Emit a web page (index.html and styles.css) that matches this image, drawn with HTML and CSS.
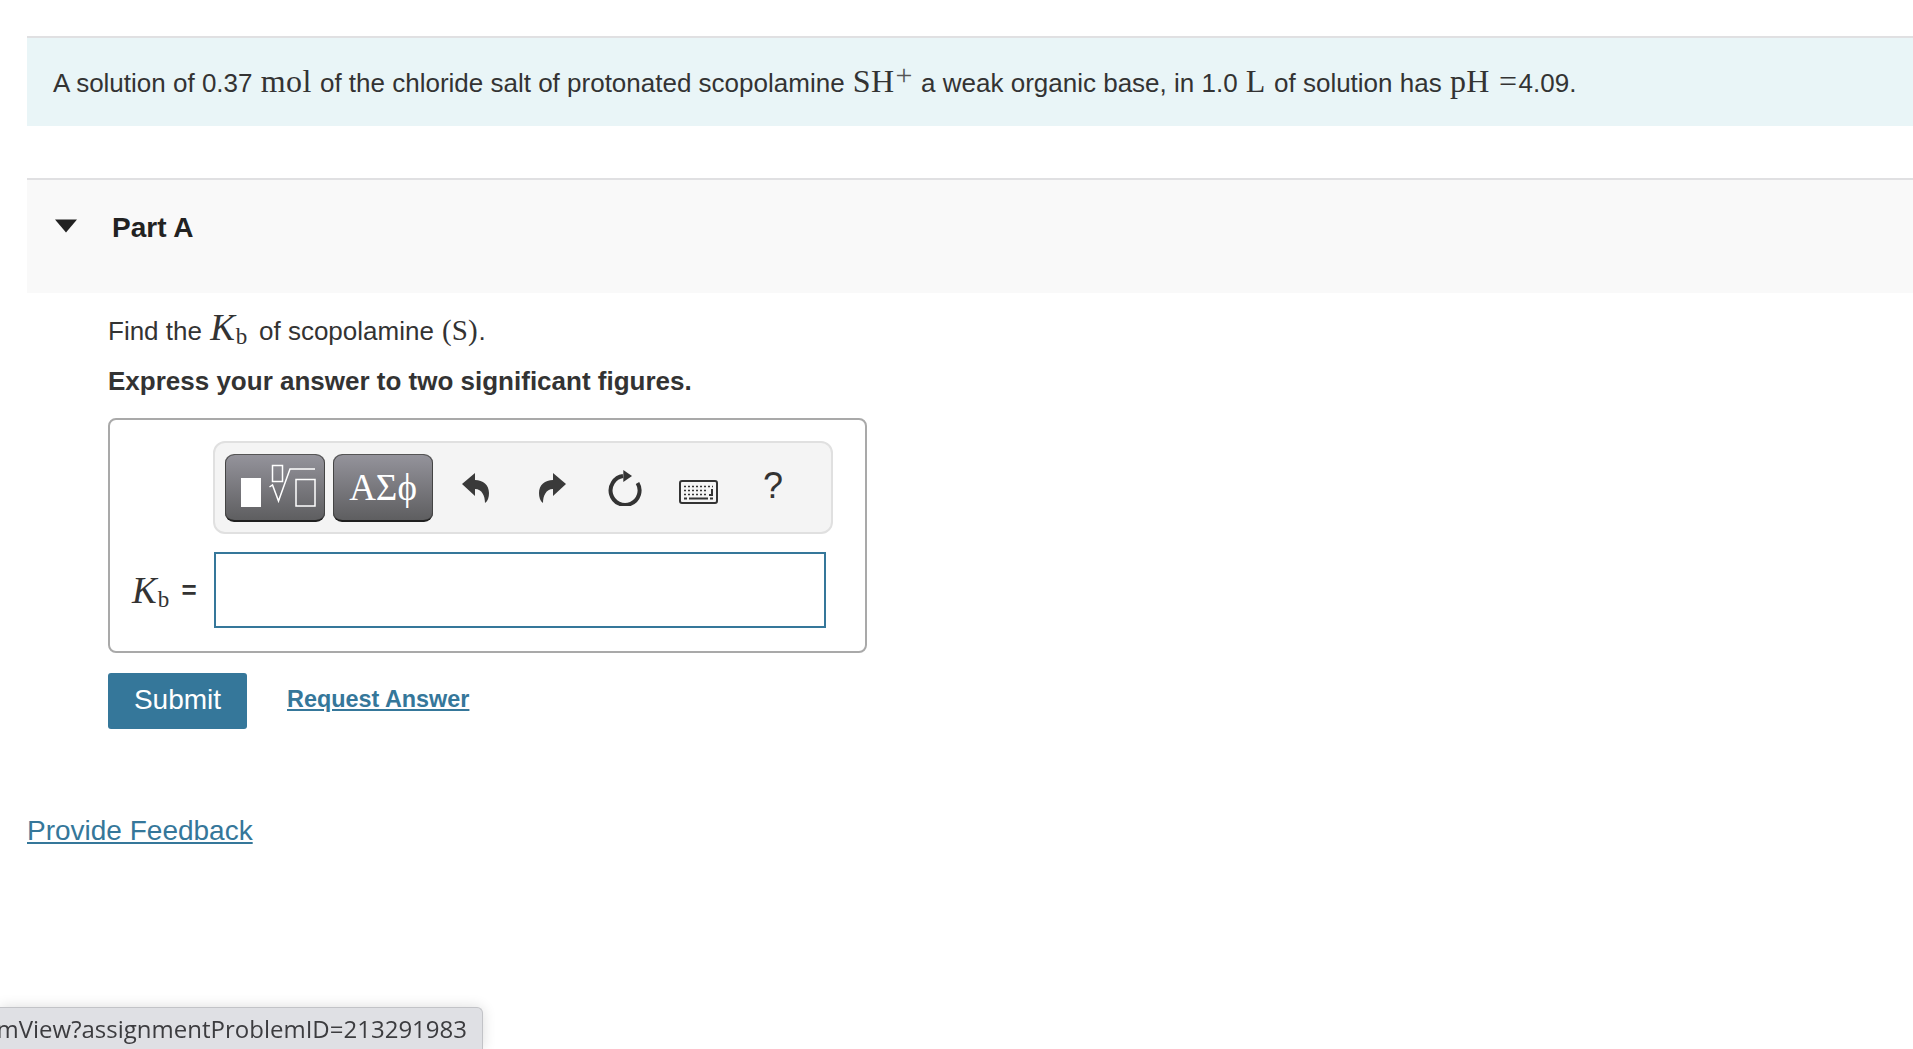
FILE: index.html
```html
<!DOCTYPE html>
<html lang="en">
<head>
<meta charset="utf-8">
<title>Part A</title>
<link rel="stylesheet" href="styles.css">
</head>
<body>
<main class="page">
  <section class="stem">
    <p>A solution of 0.37 <span class="m">mol</span> of the chloride salt of protonated scopolamine <span class="m">SH<sup>+</sup></span> a weak organic base, in 1.0 <span class="m">L</span> of solution has <span class="m">pH</span> <span class="m">=</span>4.09.</p>
  </section>
  <section class="part-head">
    <svg class="caret" width="22" height="14" viewBox="0 0 22 14"><path d="M0 0.5H22L11 13.5Z" fill="#222"/></svg>
    <h2>Part A</h2>
  </section>
  <section class="part-body">
    <p class="q">Find the <span class="m kb"><i>K</i><sub>b</sub></span> of scopolamine <span class="m paren">(S)</span>.</p>
    <p class="inst">Express your answer to two significant figures.</p>
    <div class="answer">
      <div class="toolbar">
        <button class="tbtn" aria-label="Templates">
          <svg width="100" height="68" viewBox="0 0 100 68" fill="none" stroke="#fff" stroke-width="1.500">
            <rect x="16" y="25" width="20" height="29" fill="#fff" stroke="none"/>
            <rect x="47.500" y="12.500" width="10" height="16"/>
            <path d="M44.500 34l3-2 6 16 11.500-32h25"/>
            <rect x="71" y="26.500" width="19" height="26.500"/>
          </svg>
        </button>
        <button class="tbtn sym">ΑΣϕ</button>
        <span class="ico ico-undo"><svg width="27" height="30" viewBox="0 0 27 30"><path d="M0 11 13 0v7c8 0 14 5 14 13 0 4-1 8-4 10 0-7-3-14-10-14v7z" fill="#3a3a3a"/></svg></span>
        <span class="ico ico-redo"><svg width="27" height="30" viewBox="0 0 27 30"><path d="M27 11 14 0v7C6 7 0 12 0 20c0 4 1 8 4 10 0-7 3-14 10-14v7z" fill="#3a3a3a"/></svg></span>
        <span class="ico ico-reset"><svg width="34" height="36" viewBox="0 0 34 36" fill="none"><path d="M15 6.100A14.500 14.500 0 1 0 29.500 13" stroke="#333" stroke-width="4"/><path d="M15.300 0 24 6 15.300 12z" fill="#333"/></svg></span>
        <span class="ico ico-kbd"><svg width="39" height="24" viewBox="0 0 39 24" fill="none" stroke="#333"><rect x="1" y="1" width="37" height="22" rx="2" stroke-width="2"/><path d="M5 6.500h29M5 10.500h24M5 14.500h24" stroke-width="1.500" stroke-dasharray="2 2"/><path d="M10 18.500h19M33 9v6h-3" stroke-width="2"/><path d="M5 18.500h3M31 18.500h3" stroke-width="2"/></svg></span>
        <span class="ico ico-help">?</span>
      </div>
      <div class="row">
        <label class="lbl"><span class="m k"><i>K</i><sub>b</sub></span><span class="eq">=</span></label>
        <div class="input"></div>
      </div>
    </div>
    <div class="actions">
      <button class="submit">Submit</button>
      <a class="req" href="#">Request Answer</a>
    </div>
  </section>
  <a class="feedback" href="#">Provide Feedback</a>
</main>
<div class="status"><span>mView?assignmentProblemID=213291983</span></div>
</body>
</html>
```
FILE: styles.css
```css
* { box-sizing: border-box; }
html, body { margin: 0; height: 100%; overflow: hidden; background: #fff; }
body { font-family: "Liberation Sans", Arial, sans-serif; color: #333; font-size: 26px; }
p, h2 { margin: 0; }
.page { padding: 36px 0 0 27px; }
.m { font-family: "Liberation Serif", serif; font-size: 32px; letter-spacing: .4px; margin: 0 1px; line-height: 1; }
.m i { font-size: 37px; letter-spacing: 1px; }
.m sup { font-size: 30px; line-height: 0; vertical-align: 7px; margin-left: 1px; color: #555; }
.m sub { font-size: 23px; line-height: 0; vertical-align: -4px; }
.kb { margin-right: 4px; }
.paren { font-size: 29px; letter-spacing: 0; }
.stem { height: 90px; background: #e9f5f7; border-top: 2px solid #e0e0e2; padding: 0 0 0 26px; display: flex; align-items: center; }
.part-head { margin-top: 52px; height: 115px; background: #f9f9f9; border-top: 2px solid #e0e0e2; display: flex; align-items: center; padding: 0 0 18px 28px; }
.caret { margin-top: -3px; }
.part-head h2 { font-size: 28px; line-height: 32px; color: #222; margin-left: 35px; }
.part-body { padding: 16px 0 0 81px; }
.q { line-height: 36px; height: 36px; }
.inst { font-weight: 700; line-height: 36px; margin-top: 18px; }
.answer { margin-top: 19px; width: 759px; height: 235px; border: 2px solid #a9a9a9; border-radius: 8px; padding: 21px 0 0 103px; }
.toolbar { width: 620px; height: 93px; background: #f4f4f4; border: 2px solid #e0e0e0; border-radius: 12px; display: flex; align-items: center; padding: 0 0 0 10px; }
.tbtn { width: 100px; height: 68px; margin-right: 8px; padding: 0; border: 0; border-top: 1px solid #555; border-bottom: 2px solid #1f1f1f; box-shadow: inset 1px 0 #444, inset -1px 0 #444; border-radius: 9px; background: linear-gradient(#94939b, #5e5e60); display: flex; align-items: center; justify-content: center; color: #fff; overflow: hidden; }
.tbtn svg { flex: none; }
.sym { font-family: "Liberation Serif", serif; font-size: 37px; }
.ico { display: flex; align-items: center; justify-content: center; color: #333; }
.ico-undo { margin-left: 21px; }
.ico-redo { margin-left: 50px; }
.ico-reset { margin-left: 42px; }
.ico-kbd { margin-left: 37px; margin-top: 8px; }
.ico-help { margin-left: 45px; font-size: 36px; margin-top: -4px; }
.row { display: flex; align-items: center; margin-top: 18px; margin-left: -100px; }
.lbl { width: 101px; display: flex; align-items: center; padding-left: 19px; }
.k { font-size: 34px; margin: 0; }
.k i { font-size: 37px; }
.eq { font-size: 26px; margin-left: 12px; font-weight: 700; }
.input { width: 612px; height: 76px; border: 2px solid #35779a; background: #fff; }
.actions { display: flex; align-items: center; margin-top: 20px; }
.submit { width: 139px; height: 56px; border: 0; border-radius: 3px; background: #35779a; color: #fff; font: 28px/52px "Liberation Sans", Arial, sans-serif; padding: 0 0 2px; }
.req { font-size: 23.400px; font-weight: 700; color: #35779a; margin: -3px 0 0 40px; }
.feedback { display: inline-block; font-size: 28px; line-height: 34px; color: #35779a; margin-top: 85px; }
.status { position: fixed; left: 0; bottom: 0; width: 483px; height: 42px; background: #dfe0e4; border: 1px solid #c2c3c7; border-width: 1px 1px 0 0; border-top-right-radius: 6px; box-shadow: 0 0 14px rgba(0,0,0,.14); display: flex; justify-content: flex-end; align-items: center; overflow: hidden; white-space: nowrap; padding-right: 15px; font: 24px "Open Sans", sans-serif; color: #3c3c3f; }
.status span { flex: none; }
```
